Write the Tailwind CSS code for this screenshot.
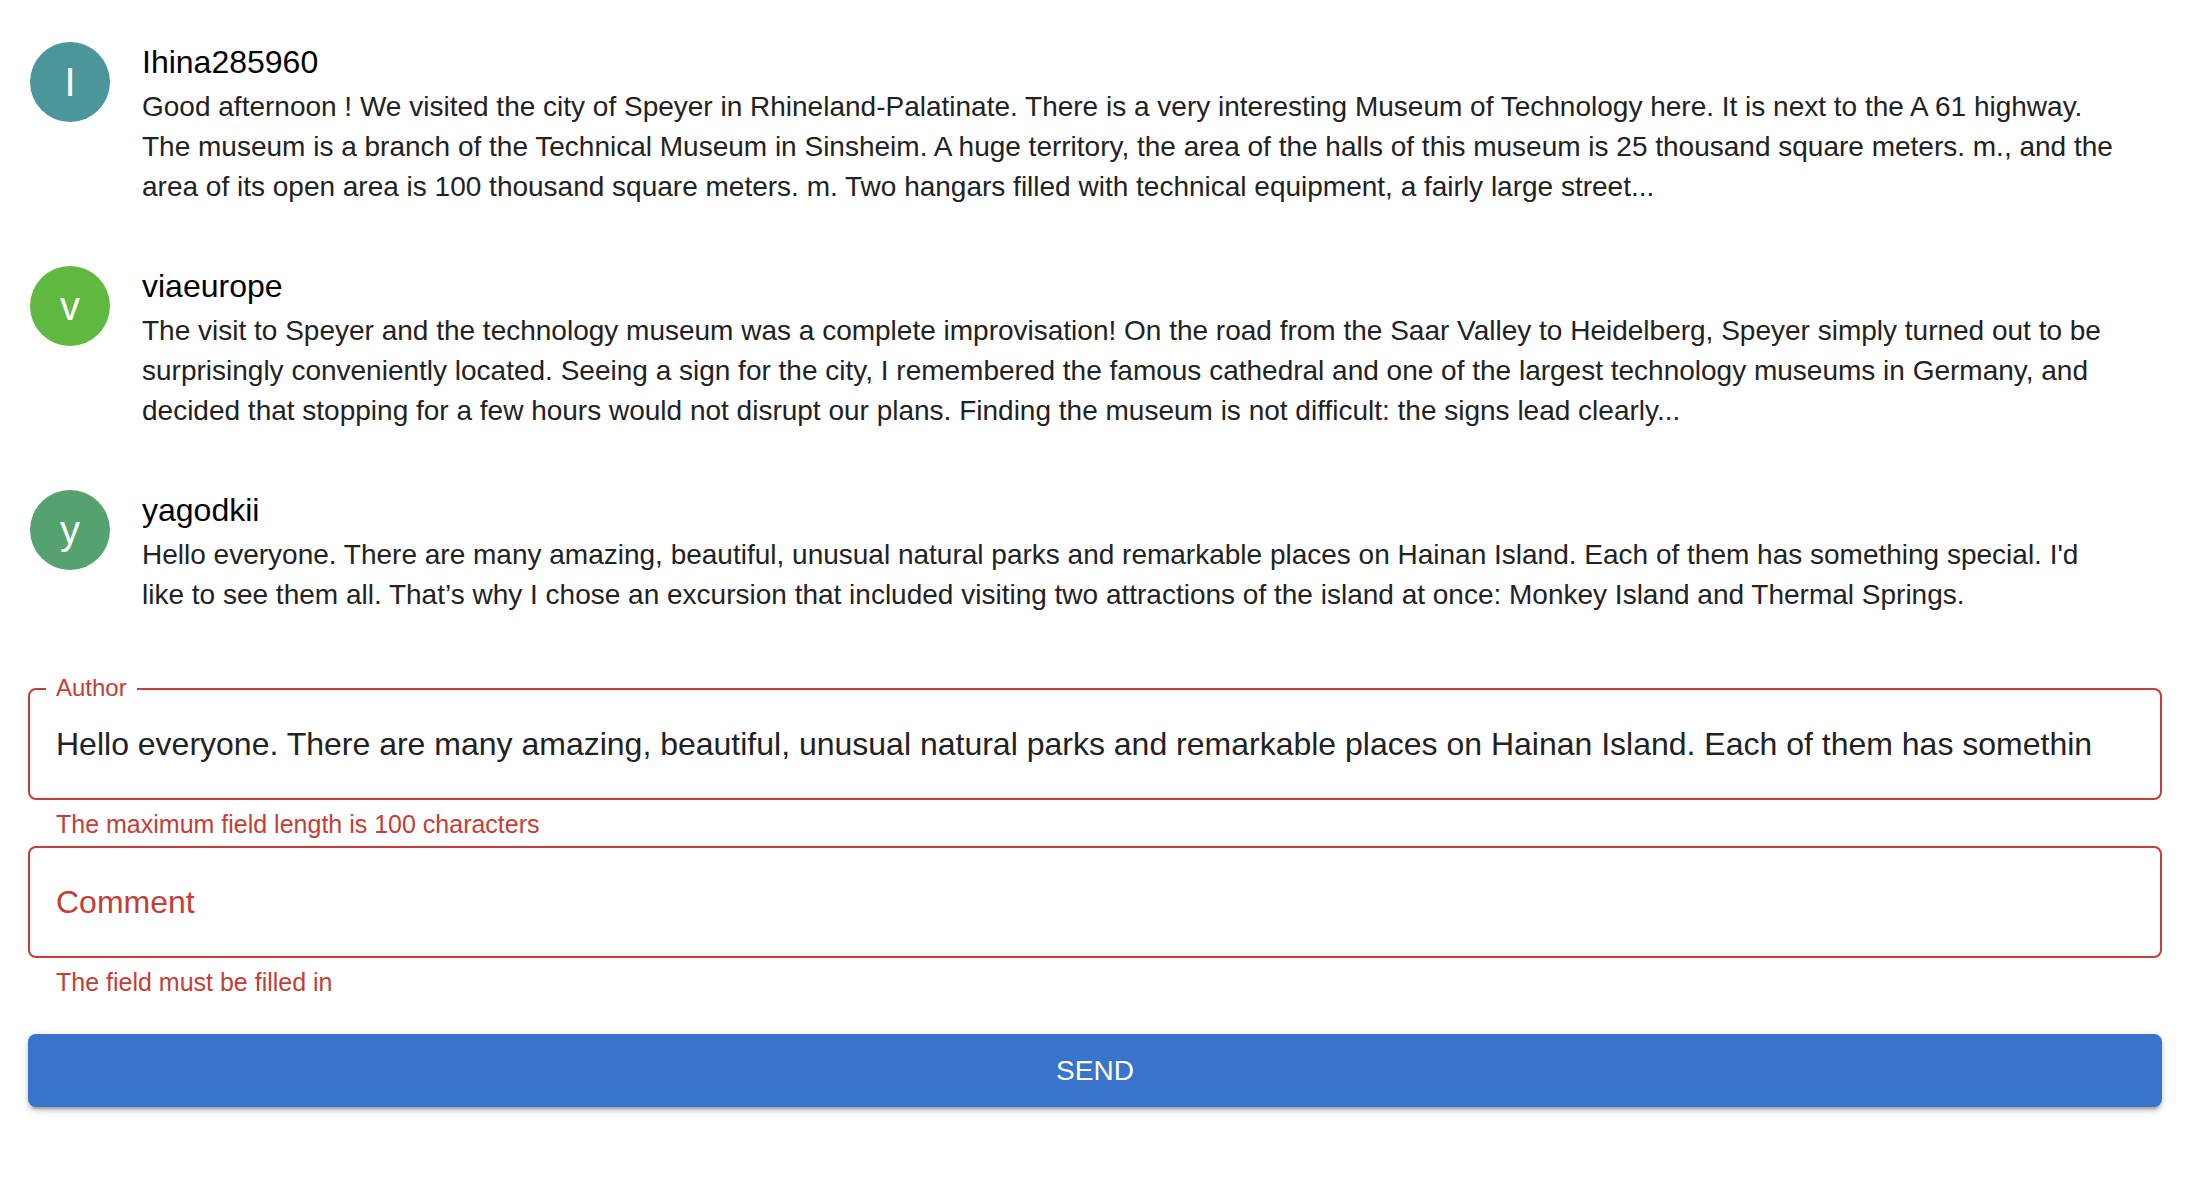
<!DOCTYPE html>
<html lang="en">
<head>
<meta charset="utf-8">
<meta name="viewport" content="width=device-width, initial-scale=1">
<title>Comments</title>
<script src="https://cdn.jsdelivr.net/npm/@tailwindcss/browser@4"></script>
</head>
<body class="bg-white font-['Liberation_Sans',Arial,sans-serif] text-[#222]">
<main class="pt-[38px] pb-16 pl-7 pr-[30px]">
  <ul class="flex flex-col gap-[55px] pl-[2px]">
    <li class="flex items-start gap-8">
      <div class="mt-1 flex size-20 shrink-0 items-center justify-center rounded-full bg-[#4b969a] text-[40px] leading-10 text-white">I</div>
      <div class="min-w-0 flex-1 pr-10">
        <h2 class="text-[32px] leading-12 text-black">Ihina285960</h2>
        <p class="mt-px text-[28px] leading-10">Good afternoon ! We visited the city of Speyer in Rhineland-Palatinate. There is a very interesting Museum of Technology here. It is next to the A 61 highway. The museum is a branch of the Technical Museum in Sinsheim. A huge territory, the area of the halls of this museum is 25 thousand square meters. m., and the area of its open area is 100 thousand square meters. m. Two hangars filled with technical equipment, a fairly large street...</p>
      </div>
    </li>
    <li class="flex items-start gap-8">
      <div class="mt-1 flex size-20 shrink-0 items-center justify-center rounded-full bg-[#5fb83f] text-[40px] leading-10 text-white">v</div>
      <div class="min-w-0 flex-1 pr-10">
        <h2 class="text-[32px] leading-12 text-black">viaeurope</h2>
        <p class="mt-px text-[28px] leading-10">The visit to Speyer and the technology museum was a complete improvisation! On the road from the Saar Valley to Heidelberg, Speyer simply turned out to be surprisingly conveniently located. Seeing a sign for the city, I remembered the famous cathedral and one of the largest technology museums in Germany, and decided that stopping for a few hours would not disrupt our plans. Finding the museum is not difficult: the signs lead clearly...</p>
      </div>
    </li>
    <li class="flex items-start gap-8">
      <div class="mt-1 flex size-20 shrink-0 items-center justify-center rounded-full bg-[#54a36f] text-[40px] leading-10 text-white">y</div>
      <div class="min-w-0 flex-1 pr-10">
        <h2 class="text-[32px] leading-12 text-black">yagodkii</h2>
        <p class="mt-px text-[28px] leading-10">Hello everyone. There are many amazing, beautiful, unusual natural parks and remarkable places on Hainan Island. Each of them has something special. I'd like to see them all. That’s why I chose an excursion that included visiting two attractions of the island at once: Monkey Island and Thermal Springs.</p>
      </div>
    </li>
  </ul>

  <form class="mt-[73px] flex flex-col">
    <div class="relative">
      <input id="author" type="text" aria-describedby="author-error" aria-invalid="true" value="Hello everyone. There are many amazing, beautiful, unusual natural parks and remarkable places on Hainan Island. Each of them has somethin" class="block h-28 w-full rounded-lg border-2 border-[#c23e36] px-[26px] text-[32px] outline-none">
      <label for="author" class="absolute -top-3 left-[18px] bg-white px-[10px] text-2xl leading-6 text-[#c23e36]">Author</label>
    </div>
    <p id="author-error" class="mt-1 mb-[2px] px-7 text-[25px] leading-10 text-[#c23e36]">The maximum field length is 100 characters</p>
    <div class="relative">
      <input id="comment" type="text" aria-describedby="comment-error" aria-invalid="true" class="block h-28 w-full rounded-lg border-2 border-[#c23e36] px-[26px] text-[32px] outline-none">
      <label for="comment" class="pointer-events-none absolute inset-y-0 left-7 flex items-center text-[32px] text-[#c23e36]">Comment</label>
    </div>
    <p id="comment-error" class="mt-1 mb-[2px] px-7 text-[25px] leading-10 text-[#c23e36]">The field must be filled in</p>
    <button type="submit" class="mt-[30px] h-[73px] w-full rounded-lg bg-[#3874cb] text-[28px] text-white shadow-[0_6px_2px_-4px_rgb(0_0_0/0.2),0_4px_4px_0_rgb(0_0_0/0.14),0_2px_10px_0_rgb(0_0_0/0.12)]">SEND</button>
  </form>
</main>
</body>
</html>
